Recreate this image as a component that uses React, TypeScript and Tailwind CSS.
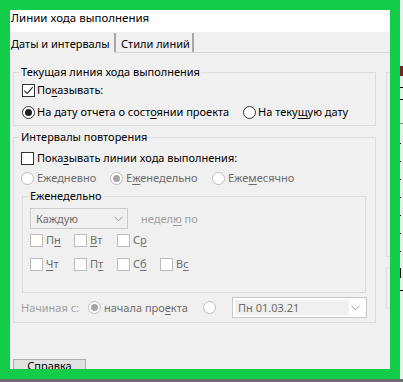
import React from "react";

const Check = ({ checked = false, disabled = false }: { checked?: boolean; disabled?: boolean }) => (
  <span
    className={
      disabled
        ? "w-[13px] h-[13px] border border-[#bcbcbc] bg-white flex items-center justify-center shrink-0"
        : "w-[13px] h-[13px] border border-[#333333] bg-white flex items-center justify-center shrink-0"
    }
  >
    {checked && (
      <svg width="11" height="11" viewBox="0 0 11 11">
        <path d="M1.3 5.6 L4.2 8.5 L9.7 2.2" stroke="#222" strokeWidth="1.1" fill="none" />
      </svg>
    )}
  </span>
);

const Radio = ({ checked = false, disabled = false }: { checked?: boolean; disabled?: boolean }) => (
  <span
    className={
      disabled
        ? "w-[13px] h-[13px] rounded-full border border-[#bcbcbc] bg-white flex items-center justify-center shrink-0"
        : "w-[13px] h-[13px] rounded-full border border-[#333333] bg-white flex items-center justify-center shrink-0"
    }
  >
    {checked && (
      <span className={disabled ? "w-[7px] h-[7px] rounded-full bg-[#a5a5a5]" : "w-[7px] h-[7px] rounded-full bg-[#222222]"} />
    )}
  </span>
);

const Chevron = ({ color }: { color: string }) => (
  <svg width="9" height="6" viewBox="0 0 9 6">
    <path d="M0.5 0.8 L4.5 4.8 L8.5 0.8" stroke={color} strokeWidth="1" fill="none" />
  </svg>
);

const Day = ({ pre, u, post }: { pre: string; u: string; post: string }) => (
  <div className="flex items-center h-[20px]">
    <Check disabled />
    <span className="ml-[3px] text-[#6d6d6d]">
      {pre}
      <span className="underline underline-offset-2">{u}</span>
      {post}
    </span>
  </div>
);

export default function App() {
  return (
    <div className="w-[403px] h-[382px] bg-[#ececec] overflow-hidden font-['Noto_Sans',sans-serif] text-[11px] leading-4 text-black">
      <div className="flex">
        <div className="w-[400px] h-[379px] border-[10px] border-[#12cc4a] bg-[#f0f0f0] overflow-hidden flex flex-col">
          {/* title */}
          <div className="h-[22px] bg-white pl-[1px] shrink-0 text-[11.5px] leading-4 whitespace-nowrap">Линии хода выполнения</div>
          {/* tabs */}
          <div className="h-[21px] flex shrink-0">
            <div className="w-[104px] h-full pl-[1px] pt-[4px] whitespace-nowrap">Даты и интервалы</div>
            <div className="flex-1 border-b border-[#d9d9d9] flex">
              <div className="mt-[1px] w-[80px] border-l-2 border-r-2 border-l-[#a8a8a8] border-r-[#a8a8a8] pl-[5px] pt-[3px] whitespace-nowrap">
                Стили линий
              </div>
            </div>
          </div>
          {/* content */}
          <div className="flex pl-[3px]">
            <div className="w-[363px] flex flex-col shrink-0">
              {/* group 1 */}
              <div className="relative mt-[19px] border border-[#dcdcdc] pt-[6px] pb-[2px] pl-[8px]">
                <span className="absolute left-[6px] -top-[9px] px-px bg-[#f0f0f0] whitespace-nowrap">Текущая линия хода выполнения</span>
                <div className="h-[22px] flex items-center">
                  <Check checked />
                  <span className="ml-[2px]">
                    По<span className="underline underline-offset-2">к</span>азывать:
                  </span>
                </div>
                <div className="h-[22px] flex items-center">
                  <div className="w-[221px] flex items-center">
                    <Radio checked />
                    <span className="ml-[2px] whitespace-nowrap">
                      На дату отчета о сост<span className="underline underline-offset-2">о</span>янии проекта
                    </span>
                  </div>
                  <Radio />
                  <span className="ml-[2px] whitespace-nowrap">
                    На теку<span className="underline underline-offset-2">щ</span>ую дату
                  </span>
                </div>
              </div>

              {/* group 2 */}
              <div className="relative mt-[11px] border border-[#dcdcdc] pt-[10px] pb-[4px] pl-[7px]">
                <span className="absolute left-[6px] -top-[9px] px-px bg-[#f0f0f0] whitespace-nowrap">Интервалы повторения</span>
                <div className="h-[20px] flex items-center">
                  <Check />
                  <span className="ml-[3px] whitespace-nowrap">
                    Пока<span className="underline underline-offset-2">з</span>ывать линии хода выполнения:
                  </span>
                </div>
                <div className="h-[20px] flex items-center text-[#6d6d6d]">
                  <div className="w-[89px] flex items-center">
                    <Radio disabled />
                    <span className="ml-[3px]">Ежедневно</span>
                  </div>
                  <div className="w-[102px] flex items-center">
                    <Radio checked disabled />
                    <span className="ml-[3px]">
                      Е<span className="underline underline-offset-2">ж</span>енедельно
                    </span>
                  </div>
                  <div className="flex items-center">
                    <Radio disabled />
                    <span className="ml-[3px]">
                      Еже<span className="underline underline-offset-2">м</span>есячно
                    </span>
                  </div>
                </div>

                {/* inner weekly box */}
                <div className="relative mt-[8px] ml-[1px] mr-[9px] border border-[#dcdcdc] pt-[11px] pb-[18px] pl-[7px]">
                  <span className="absolute left-[6px] -top-[9px] px-px bg-[#f0f0f0]">Еженедельно</span>
                  <div className="flex items-center">
                    <div className="w-[98px] h-[21px] border border-[#cccccc] bg-[#f0f0f0] flex items-center justify-between pl-[5px] pr-[4px] text-[#6d6d6d]">
                      <span>Каждую</span>
                      <Chevron color="#9a9a9a" />
                    </div>
                    <span className="ml-[13px] text-[#a0a0a0]">
                      недел<span className="underline underline-offset-2">ю</span> по
                    </span>
                  </div>
                  <div className="mt-[1px] grid grid-cols-[44px_43px_43px_43px]">
                    <Day pre="П" u="н" post="" />
                    <Day pre="" u="В" post="т" />
                    <Day pre="С" u="р" post="" />
                  </div>
                  <div className="mt-[4px] grid grid-cols-[44px_43px_43px_43px]">
                    <Day pre="" u="Ч" post="т" />
                    <Day pre="П" u="т" post="" />
                    <Day pre="С" u="б" post="" />
                    <Day pre="В" u="с" post="" />
                  </div>
                </div>

                {/* starting row */}
                <div className="mt-[4px] h-[21px] flex items-center">
                  <span className="w-[67px] text-[#a0a0a0]">Начиная с:</span>
                  <div className="w-[115px] flex items-center">
                    <Radio checked disabled />
                    <span className="ml-[3px] text-[#6d6d6d] whitespace-nowrap">
                      начала про<span className="underline underline-offset-2">е</span>кта
                    </span>
                  </div>
                  <Radio disabled />
                  <div className="ml-[16px] w-[135px] h-[21px] border border-[#c8c8c8] bg-white flex items-center pl-[2px] pr-[6px]">
                    <span className="w-[114px] h-[15px] bg-[#f0f0f0] text-[#6d6d6d] pl-[3px] leading-[15px]">Пн 01.03.21</span>
                    <span className="ml-auto">
                      <Chevron color="#9a9a9a" />
                    </span>
                  </div>
                </div>
              </div>

              {/* button */}
              <div className="mt-[36px] w-[73px] h-[23px] border border-[#adadad] bg-[#e1e1e1] flex justify-center shrink-0 leading-[12px]">
                <span>
                  Спр<span className="underline underline-offset-2">а</span>вка
                </span>
              </div>
            </div>

            {/* right column partially visible */}
            <div className="ml-[10px] flex-1 flex flex-col">
              <div className="mt-[19px] h-[185px] border-l border-t border-b border-[#dcdcdc]" />
              <div className="mt-[11px] h-[40px] border-l border-t border-b border-[#dcdcdc]" />
            </div>
          </div>
        </div>
        {/* outside strip */}
        <div className="w-[3px] flex flex-col">
          <div className="mt-[66px] h-[10px] bg-[#7a1f2a]" />
          <div className="mt-[11px] h-px bg-black" />
          <div className="mt-[11px] h-px bg-black" />
          <div className="mt-[23px] h-px bg-[#888]" />
          <div className="mt-[19px] h-px w-px bg-black" />
          <div className="mt-[17px] h-px w-px bg-black" />
          <div className="mt-[17px] h-px w-px bg-black" />
          <div className="mt-[17px] h-px w-px bg-black" />
          <div className="mt-[17px] h-px w-px bg-black" />
          <div className="mt-[17px] h-px w-px bg-black" />
          <div className="mt-[17px] h-px w-px bg-black" />
          <div className="mt-[16px] h-[10px] w-px bg-black" />
          <div className="mt-[12px] h-px bg-black" />
        </div>
      </div>
      <div className="h-[3px] bg-[#6e6e6e]" />
    </div>
  );
}
